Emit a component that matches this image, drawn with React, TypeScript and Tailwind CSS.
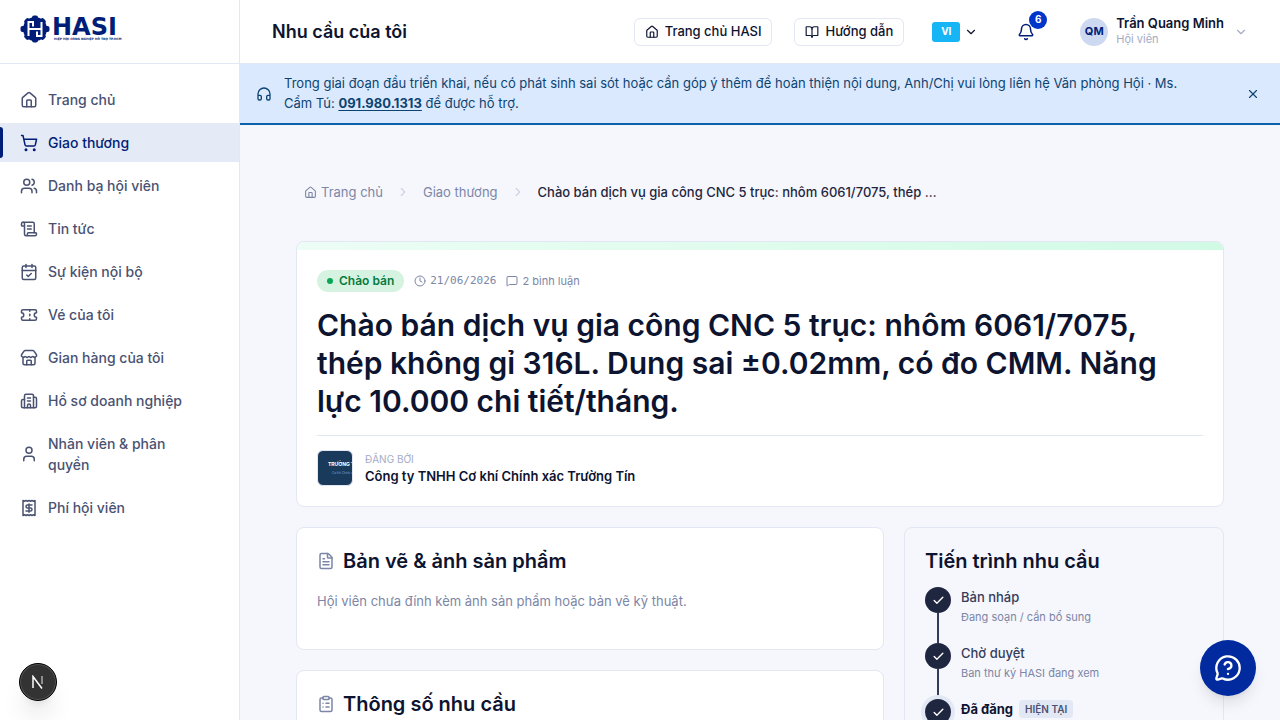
import {
  Bell,
  BookOpen,
  Building2,
  CalendarCheck,
  Check,
  ChevronDown,
  ChevronRight,
  ClipboardList,
  Clock,
  FileText,
  Headphones,
  House,
  MessageCircleQuestionMark,
  MessageSquare,
  ScrollText,
  ShoppingCart,
  Store,
  Ticket,
  User,
  Users,
  X,
  type LucideIcon,
} from 'lucide-react';

interface NavItem {
  label: string;
  icon: LucideIcon | typeof ReceiptIcon;
  active?: boolean;
}

interface Step {
  title: string;
  note: string;
  current?: boolean;
}

const navItems: NavItem[] = [
  { label: 'Trang chủ', icon: House },
  { label: 'Giao thương', icon: ShoppingCart, active: true },
  { label: 'Danh bạ hội viên', icon: Users },
  { label: 'Tin tức', icon: ScrollText },
  { label: 'Sự kiện nội bộ', icon: CalendarCheck },
  { label: 'Vé của tôi', icon: Ticket },
  { label: 'Gian hàng của tôi', icon: Store },
  { label: 'Hồ sơ doanh nghiệp', icon: Building2 },
  { label: 'Nhân viên & phân quyền', icon: User },
  { label: 'Phí hội viên', icon: ReceiptIcon },
];

const steps: Step[] = [
  { title: 'Bản nháp', note: 'Đang soạn / cần bổ sung' },
  { title: 'Chờ duyệt', note: 'Ban thư ký HASI đang xem' },
  { title: 'Đã đăng', note: 'Hiển thị công khai', current: true },
];

function ReceiptIcon({ size = 18, strokeWidth = 2, className }: { size?: number | string; strokeWidth?: number | string; className?: string }) {
  return (
    <svg width={size} height={size} viewBox="0 0 24 24" fill="none" stroke="currentColor" strokeWidth={strokeWidth} strokeLinecap="round" strokeLinejoin="round" className={className}>
      <path d="M4 2v20l2-1 2 1 2-1 2 1 2-1 2 1 2-1 2 1V2l-2 1-2-1-2 1-2-1-2 1-2-1-2 1Z" />
      <path d="M16 8h-6a2 2 0 1 0 0 4h4a2 2 0 1 1 0 4H8" />
      <path d="M12 17.5v-11" />
    </svg>
  );
}

function Logo() {
  return (
    <a href="#" aria-label="HASI" className="flex items-center gap-0.5 text-[#001e78]">
      <svg width="30" height="28" viewBox="0 0 30 28">
        <g fill="#001e78">
          <circle cx="15" cy="14" r="12" />
          <rect x="12" y="0.5" width="6" height="27" rx="2" />
          <rect x="12" y="0.5" width="6" height="27" rx="2" transform="rotate(45 15 14)" />
          <rect x="12" y="-0.5" width="6" height="29" rx="2" transform="rotate(90 15 14)" />
          <rect x="12" y="0.5" width="6" height="27" rx="2" transform="rotate(135 15 14)" />
        </g>
        <path d="M8.5 21V7H13v4.5M21.5 7v14H17v-4.5M8.5 14h13" stroke="#fff" strokeWidth="2" fill="none" />
      </svg>
      <span className="flex flex-col">
        <span className="font-['DejaVu_Sans',sans-serif] text-2xl leading-5 font-bold">HASI</span>
        <span className="pl-0.5 font-['DejaVu_Sans',sans-serif] text-[3px] leading-1 font-bold whitespace-nowrap">HIỆP HỘI CÔNG NGHIỆP HỖ TRỢ TP.HCM</span>
      </span>
    </a>
  );
}

function Sidebar() {
  return (
    <aside className="w-60 shrink-0 border-r border-[#e3e6f3] bg-white">
      <div className="flex h-16 items-center border-b border-[#e3e6f3] px-5 pb-1.5">
        <Logo />
      </div>
      <nav className="flex flex-col gap-1 py-4">
        {navItems.map(({ label, icon: Icon, active }) => (
          <a
            key={label}
            href="#"
            className={`relative flex items-center gap-2.5 py-[9px] pr-9 pl-5 text-sm leading-normal font-medium ${active ? 'bg-[#e4eaf6] text-[#001e78]' : 'text-[#4a5272]'}`}
          >
            {active && <span className="absolute inset-y-1 left-0 w-[3px] rounded-r-sm bg-[#001e78]" />}
            <Icon size={18} strokeWidth={2} className="shrink-0" />
            <span>{label}</span>
          </a>
        ))}
      </nav>
    </aside>
  );
}

function Header() {
  return (
    <header className="flex h-16 items-center justify-between border-b border-[#e3e6f3] bg-white px-8">
      <p className="text-lg font-semibold">Nhu cầu của tôi</p>
      <div className="flex items-center">
        <a href="#" className="mr-[22px] flex h-7 items-center gap-1.5 rounded-md border border-[#e3e6f3] px-2.5 text-[13px] font-medium">
          <House size={14} />
          Trang chủ HASI
        </a>
        <a href="#" className="mr-7 flex h-7 items-center gap-1.5 rounded-md border border-[#e3e6f3] px-2.5 text-[13px] font-medium">
          <BookOpen size={14} />
          Hướng dẫn
        </a>
        <button type="button" className="mr-[39px] flex items-center gap-1">
          <span className="flex h-5 w-7 items-center justify-center rounded-[3px] bg-[#16b5f5] text-[10px] font-bold text-white">VI</span>
          <ChevronDown size={14} />
        </button>
        <button type="button" aria-label="Thông báo" className="relative mr-[45px] text-[#001e78]">
          <Bell size={18} />
          <span className="absolute -top-3 left-3 flex size-[18px] items-center justify-center rounded-full bg-[#0035cc] text-[10px] font-bold text-white">6</span>
        </button>
        <button type="button" className="flex items-center gap-2 text-left">
          <span className="flex size-7 items-center justify-center rounded-full bg-[#cdd8f1] text-[11px] font-bold text-[#001e78]">QM</span>
          <span className="mr-0.5 flex flex-col">
            <span className="text-[13px] leading-[15px] font-semibold">Trần Quang Minh</span>
            <span className="text-[11px] leading-4 text-[#a3abc6]">Hội viên</span>
          </span>
          <ChevronDown size={14} className="text-[#a3abc6]" />
        </button>
      </div>
    </header>
  );
}

function Notice() {
  return (
    <div className="flex items-center gap-3 border-b-2 border-[#0b62ab] bg-[#dbe9fe] px-4 py-2.5 text-[13px] leading-normal text-[#0c4471]">
      <Headphones size={16} className="shrink-0" />
      <p className="flex-1">
        Trong giai đoạn đầu triển khai, nếu có phát sinh sai sót hoặc cần góp ý thêm để hoàn thiện nội dung, Anh/Chị vui lòng liên hệ Văn phòng Hội · Ms. Cẩm Tú:{' '}
        <a href="tel:0919801313" className="font-bold underline underline-offset-2">091.980.1313</a> để được hỗ trợ.
      </p>
      <button type="button" aria-label="Đóng" className="ml-10 p-1">
        <X size={14} />
      </button>
    </div>
  );
}

function Breadcrumb() {
  return (
    <nav className="flex items-center gap-[13px] px-2 text-[13px] leading-5 text-[#7c86a6]">
      <a href="#" className="flex items-center gap-1">
        <House size={13} />
        Trang chủ
      </a>
      <ChevronRight size={14} className="text-[#cdd3e6]" />
      <a href="#">Giao thương</a>
      <ChevronRight size={14} className="text-[#cdd3e6]" />
      <span className="w-[400px] truncate font-medium text-[#1f2640]">
        Chào bán dịch vụ gia công CNC 5 trục: nhôm 6061/7075, thép không gỉ 316L. Dung sai ±0.02mm, có đo CMM.
      </span>
    </nav>
  );
}

function SummaryCard() {
  return (
    <section className="overflow-hidden rounded-lg border border-[#e3e6f3] bg-white">
      <div className="h-2 bg-linear-to-r from-[#ecfdf5] to-[#d1fae5]" />
      <div className="p-5">
        <div className="flex items-center gap-2.5 text-[11px] text-[#7c86a6]">
          <span className="flex h-[22px] items-center gap-1.5 rounded-full bg-[#d6f3e2] px-2.5 text-xs font-semibold text-[#077a3e]">
            <span className="size-1.5 rounded-full bg-[#06a856]" />
            Chào bán
          </span>
          <span className="flex items-center gap-1 font-['DejaVu_Sans_Mono',monospace]">
            <Clock size={12} />
            21/06/2026
          </span>
          <span className="flex items-center gap-1">
            <MessageSquare size={12} />
            2 bình luận
          </span>
        </div>
        <h1 className="mt-3.5 text-3xl leading-[38px] font-semibold">
          Chào bán dịch vụ gia công CNC 5 trục: nhôm 6061/7075, thép không gỉ 316L. Dung sai ±0.02mm, có đo CMM. Năng lực 10.000 chi tiết/tháng.
        </h1>
        <div className="mt-[15px] flex items-center gap-3 border-t border-[#e3e6f3] pt-3.5">
          <div className="flex size-9 flex-col justify-center gap-1 overflow-hidden rounded-md border border-[#e3e6f3] bg-[#1a3a5c] pl-2.5 whitespace-nowrap">
            <span className="text-[5px] leading-[6px] font-bold text-white">TRƯỜNG TÍN</span>
            <span className="pl-1 text-[3px] leading-1 text-[#7fa3cc]">Cơ khí Chính xác</span>
          </div>
          <div>
            <p className="text-[10px] leading-4 text-[#a3abc6]">ĐĂNG BỞI</p>
            <p className="text-[13px] leading-[18px] font-semibold">Công ty TNHH Cơ khí Chính xác Trường Tín</p>
          </div>
        </div>
      </div>
    </section>
  );
}

function Timeline() {
  return (
    <section className="rounded-lg border border-[#e3e6f3] p-5">
      <h2 className="text-xl leading-[26px] font-semibold">Tiến trình nhu cầu</h2>
      <ol className="mt-[13px]">
        {steps.map(({ title, note, current }) => (
          <li key={title} className="flex gap-2.5">
            <div className="flex flex-col items-center">
              <span className={`flex size-[26px] items-center justify-center rounded-full bg-[#1f2640] text-white ${current ? 'ring-4 ring-[#e3e8f5]' : ''}`}>
                <Check size={13} strokeWidth={2.5} />
              </span>
              {!current && <span className="w-0.5 flex-1 bg-[#343c5a]" />}
            </div>
            <div className="pb-[18px]">
              <p className={`flex items-center gap-1.5 text-[13px] leading-5 ${current ? 'font-bold' : 'font-medium text-[#343c5a]'}`}>
                {title}
                {current && <span className="rounded bg-[#e3e8f5] px-1.5 py-px text-[10px] leading-4 font-semibold text-[#4a5272]">HIỆN TẠI</span>}
              </p>
              <p className="mt-0.5 text-[11px] leading-4 text-[#7c86a6]">{note}</p>
            </div>
          </li>
        ))}
      </ol>
    </section>
  );
}

export default function App() {
  return (
    <div className="flex h-screen overflow-hidden bg-[#f6f7fc] font-['Inter',sans-serif] text-[#0d1430]">
      <Sidebar />
      <div className="min-w-0 flex-1 overflow-hidden">
        <Header />
        <Notice />
        <main className="px-14 pt-[57px]">
          <Breadcrumb />
          <div className="mt-[39px] flex flex-col gap-5">
            <SummaryCard />
            <div className="grid grid-cols-[minmax(0,1fr)_320px] items-start gap-5">
              <div className="flex flex-col gap-5">
                <section className="rounded-lg border border-[#e3e6f3] bg-white p-5">
                  <h2 className="flex items-center gap-2 text-xl leading-[26px] font-semibold">
                    <FileText size={18} className="text-[#7c86a6]" />
                    Bản vẽ & ảnh sản phẩm
                  </h2>
                  <p className="mt-[17px] pb-[18px] text-[13px] leading-5 text-[#7c86a6]">Hội viên chưa đính kèm ảnh sản phẩm hoặc bản vẽ kỹ thuật.</p>
                </section>
                <section className="rounded-lg border border-[#e3e6f3] bg-white p-5">
                  <h2 className="flex items-center gap-2 text-xl leading-[26px] font-semibold">
                    <ClipboardList size={18} className="text-[#7c86a6]" />
                    Thông số nhu cầu
                  </h2>
                </section>
              </div>
              <Timeline />
            </div>
          </div>
        </main>
      </div>
      <button type="button" aria-label="Next.js" className="fixed bottom-[19px] left-[19px] flex size-[38px] items-center justify-center rounded-full border border-black bg-[#333] text-white shadow-xl ring-1 ring-[#555] ring-inset">
        <svg width="14" height="14" viewBox="0 0 14 14" fill="none" stroke="currentColor" strokeWidth="1.5">
          <path d="M2 13V1.5l9 12" />
          <path d="M11 1v8" opacity="0.6" />
        </svg>
      </button>
      <button type="button" aria-label="Trợ giúp" className="fixed right-6 bottom-6 flex size-14 items-center justify-center rounded-full bg-[#002a9e] text-white shadow-lg">
        <MessageCircleQuestionMark size={28} />
      </button>
    </div>
  );
}
